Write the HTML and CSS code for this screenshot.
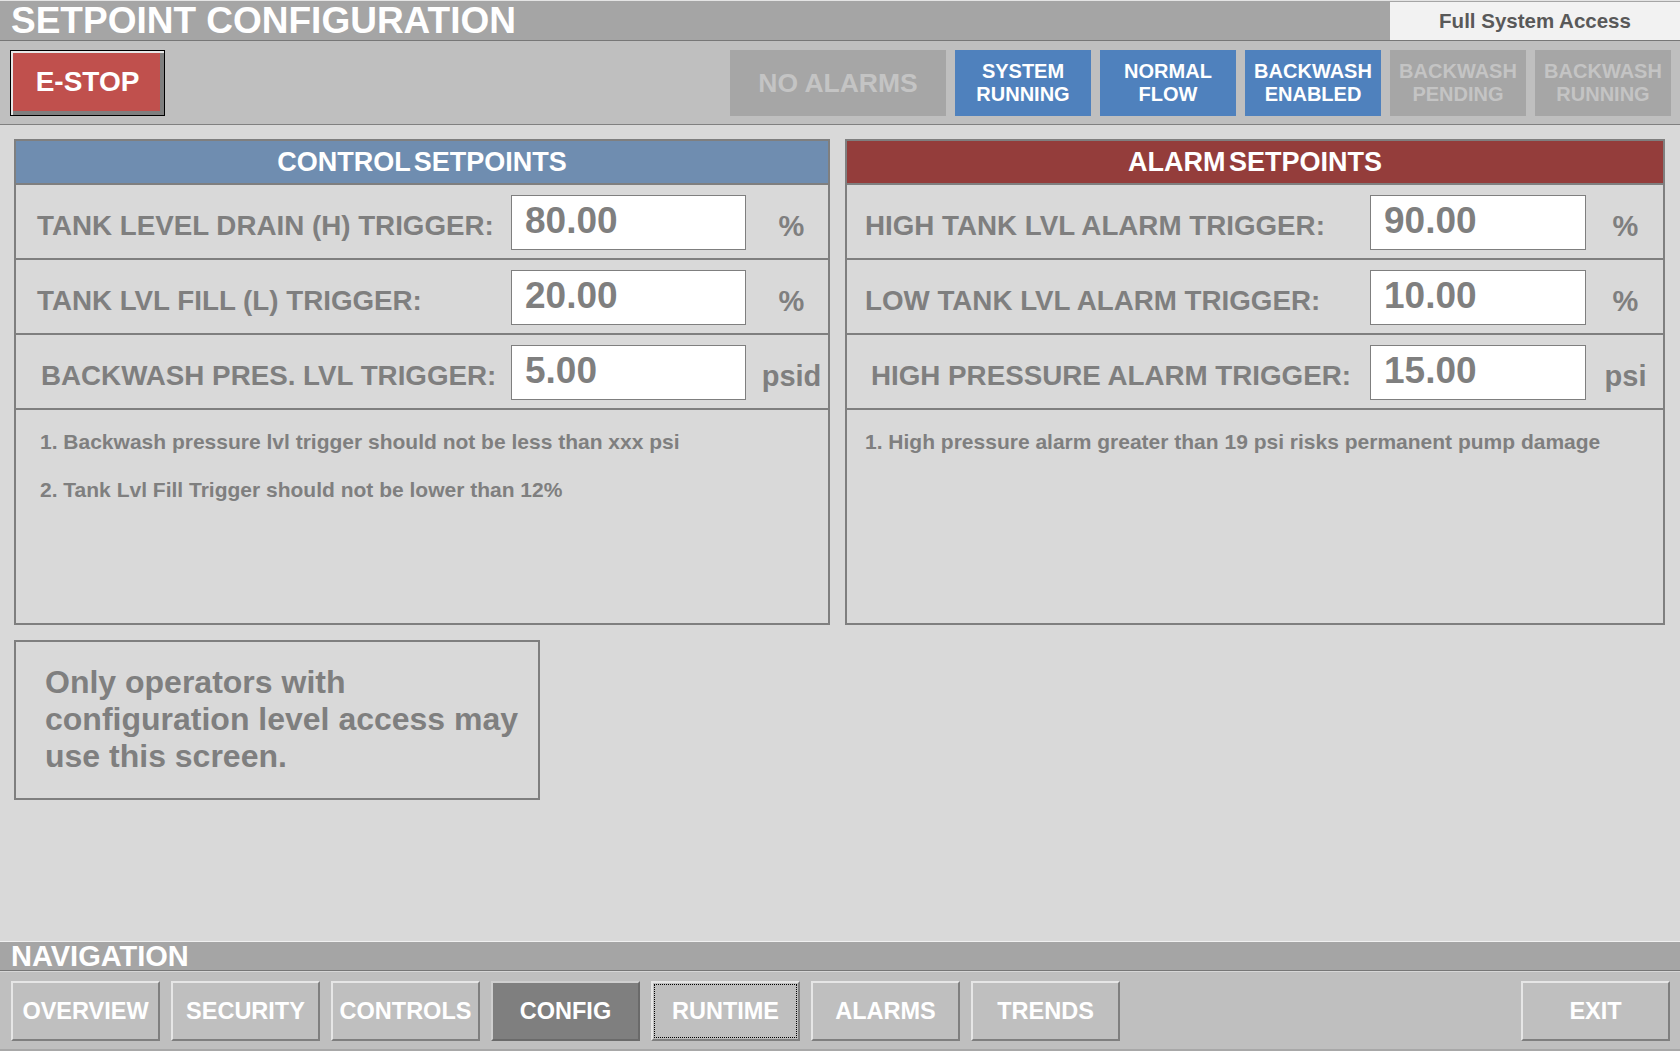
FILE: index.html
```html
<!DOCTYPE html>
<html lang="en">
<head>
<meta charset="utf-8">
<title>Setpoint Configuration</title>
<link rel="stylesheet" href="styles.css">
</head>
<body>
<header class="titlebar">
  <div class="title">SETPOINT CONFIGURATION</div>
  <div class="access">Full System Access</div>
</header>
<div class="toolbar">
  <button class="estop">E-STOP</button>
  <div class="spacer"></div>
  <div class="indicators">
    <div class="ind ind-wide off">NO ALARMS</div>
    <div class="ind on">SYSTEM<br>RUNNING</div>
    <div class="ind on">NORMAL<br>FLOW</div>
    <div class="ind on">BACKWASH<br>ENABLED</div>
    <div class="ind off">BACKWASH<br>PENDING</div>
    <div class="ind off">BACKWASH<br>RUNNING</div>
  </div>
</div>
<main class="main">
  <div class="panels">
    <section class="panel panel-left">
      <div class="panel-head head-blue">CONTROL SETPOINTS</div>
      <div class="row">
        <div class="label pl-a">TANK LEVEL DRAIN (H) TRIGGER:</div>
        <div class="value">80.00</div>
        <div class="unit">%</div>
      </div>
      <div class="row">
        <div class="label pl-a">TANK LVL FILL (L) TRIGGER:</div>
        <div class="value">20.00</div>
        <div class="unit">%</div>
      </div>
      <div class="row">
        <div class="label pl-b">BACKWASH PRES. LVL TRIGGER:</div>
        <div class="value">5.00</div>
        <div class="unit">psid</div>
      </div>
      <div class="notes">
        <p class="note">1. Backwash pressure lvl trigger should not be less than xxx psi</p>
        <p class="note">2. Tank Lvl Fill Trigger should not be lower than 12%</p>
      </div>
    </section>
    <section class="panel panel-right">
      <div class="panel-head head-red">ALARM SETPOINTS</div>
      <div class="row">
        <div class="label pl-a">HIGH TANK LVL ALARM TRIGGER:</div>
        <div class="value">90.00</div>
        <div class="unit">%</div>
      </div>
      <div class="row">
        <div class="label pl-a">LOW TANK LVL ALARM TRIGGER:</div>
        <div class="value">10.00</div>
        <div class="unit">%</div>
      </div>
      <div class="row">
        <div class="label pl-b">HIGH PRESSURE ALARM TRIGGER:</div>
        <div class="value">15.00</div>
        <div class="unit">psi</div>
      </div>
      <div class="notes">
        <p class="note">1. High pressure alarm greater than 19 psi risks permanent pump damage</p>
      </div>
    </section>
  </div>
  <div class="infobox">Only operators with<br>configuration level access may<br>use this screen.</div>
</main>
<footer class="nav">
  <div class="nav-title">NAVIGATION</div>
  <div class="nav-bar">
    <button class="nav-btn">OVERVIEW</button>
    <button class="nav-btn">SECURITY</button>
    <button class="nav-btn">CONTROLS</button>
    <button class="nav-btn active">CONFIG</button>
    <button class="nav-btn focused">RUNTIME</button>
    <button class="nav-btn">ALARMS</button>
    <button class="nav-btn">TRENDS</button>
    <button class="nav-btn exit">EXIT</button>
  </div>
</footer>
</body>
</html>
```
FILE: styles.css
```css
* { box-sizing: border-box; }

html, body {
  margin: 0;
  padding: 0;
}

body {
  width: 1680px;
  height: 1051px;
  overflow: hidden;
  background: #d9d9d9;
  font-family: "Liberation Sans", Arial, sans-serif;
  font-weight: bold;
  color: #7f7f7f;
  display: flex;
  flex-direction: column;
}

button {
  font-family: inherit;
  font-weight: bold;
  margin: 0;
  padding: 0;
  cursor: pointer;
}

/* ---------- title bar ---------- */
.titlebar {
  height: 41px;
  flex: 0 0 41px;
  display: flex;
  justify-content: space-between;
  background: #a5a5a5;
  border-top: 1px solid #e4e4e4;
  border-bottom: 1px solid #777777;
}

.title {
  color: #ffffff;
  font-size: 37px;
  line-height: 40px;
  padding-left: 11px;
  white-space: nowrap;
}

.access {
  width: 290px;
  height: 38px;
  margin-top: 1px;
  background: #f2f2f2;
  color: #595959;
  font-size: 20.5px;
  line-height: 38px;
  text-align: center;
}

/* ---------- toolbar ---------- */
.toolbar {
  height: 84px;
  flex: 0 0 84px;
  background: #bfbfbf;
  border-bottom: 1px solid #808080;
  display: flex;
  align-items: flex-start;
  padding: 9px 9px 0 10px;
}

.estop {
  width: 155px;
  height: 66px;
  background: #c0504d;
  color: #ffffff;
  font-size: 28px;
  border: 1px solid #000000;
  box-shadow: inset 2px 2px 0 #e8e8e8, inset -4px -4px 0 #7f7f7f;
  padding-bottom: 2px;
}

.spacer { flex: 1; }

.indicators {
  display: flex;
  gap: 9px;
}

.ind {
  width: 136px;
  height: 66px;
  display: flex;
  align-items: center;
  justify-content: center;
  text-align: center;
  font-size: 20px;
  line-height: 23px;
}

.ind-wide {
  width: 216px;
  font-size: 26.5px;
}

.ind.on {
  background: #4f81bd;
  color: #ffffff;
}

.ind.off {
  background: #a6a6a6;
  color: #c4c4c4;
}

/* ---------- main ---------- */
.main {
  flex: 1;
  padding: 14px 15px 0 14px;
}

.panels {
  display: grid;
  grid-template-columns: 816px 820px;
  column-gap: 15px;
}

.panel {
  height: 486px;
  border: 2px solid #7f7f7f;
  display: flex;
  flex-direction: column;
}

.panel-head {
  height: 42px;
  flex: 0 0 42px;
  color: #ffffff;
  font-size: 27px;
  word-spacing: -4px;
  line-height: 42px;
  text-align: center;
}

.head-blue { background: #6f8db0; }
.head-red { background: #943d3b; }

.row {
  height: 75px;
  flex: 0 0 75px;
  border-top: 2px solid #7f7f7f;
  display: flex;
  align-items: flex-start;
}

.label {
  font-size: 27.75px;
  line-height: 32px;
  padding-top: 25px;
  white-space: nowrap;
}

.value {
  height: 55px;
  margin-top: 10px;
  background: #ffffff;
  border: 1px solid #7f7f7f;
  font-size: 37px;
  line-height: 36px;
  padding: 7px 13px 0;
  color: #7f7f7f;
}

.unit {
  flex: 1;
  text-align: center;
  font-size: 29px;
  line-height: 32px;
  padding-top: 25px;
}

.panel-left .label { width: 495px; }
.panel-left .value { width: 235px; }
.panel-left .unit { padding-left: 9px; }
.panel-left .pl-a { padding-left: 21px; }
.panel-left .pl-b { padding-left: 25px; }

.panel-right .label { width: 523px; }
.panel-right .value { width: 216px; }
.panel-right .unit { padding-left: 2px; }
.panel-right .pl-a { padding-left: 18px; }
.panel-right .pl-b { padding-left: 24px; }

.notes {
  flex: 1;
  border-top: 2px solid #7f7f7f;
  padding-top: 20px;
}

.panel-left .notes { padding-left: 24px; }
.panel-right .notes { padding-left: 18px; }

.note {
  margin: 0 0 24px;
  font-size: 21px;
  line-height: 24px;
  white-space: nowrap;
}

.infobox {
  width: 526px;
  height: 160px;
  margin-top: 15px;
  border: 2px solid #7f7f7f;
  padding: 22px 0 0 29px;
  font-size: 32px;
  line-height: 37px;
  color: #7f7f7f;
}

/* ---------- navigation ---------- */
.nav {
  flex: 0 0 110px;
  height: 110px;
}

.nav-title {
  height: 30px;
  background: #a5a5a5;
  border-top: 1px solid #f0f0f0;
  border-bottom: 1px solid #777777;
  color: #ffffff;
  font-size: 29px;
  line-height: 28px;
  padding-left: 11px;
}

.nav-bar {
  height: 80px;
  background: #bfbfbf;
  border-top: 1px solid #d6d6d6;
  border-bottom: 2px solid #a8a8a8;
  display: flex;
  gap: 11px;
  padding: 9px 10px 0 11px;
}

.nav-btn {
  position: relative;
  width: 149px;
  height: 60px;
  background: #bfbfbf;
  color: #ffffff;
  font-size: 23.5px;
  border: 2px solid;
  border-color: #e6e6e6 #7f7f7f #7f7f7f #e6e6e6;
}

.nav-btn.active {
  background: #7f7f7f;
  border-color: #cfcfcf #6a6a6a #6a6a6a #cfcfcf;
}

.nav-btn.focused::after {
  content: "";
  position: absolute;
  inset: 1px;
  border: 1px dotted #000000;
}

.nav-btn.exit {
  margin-left: auto;
}
```
